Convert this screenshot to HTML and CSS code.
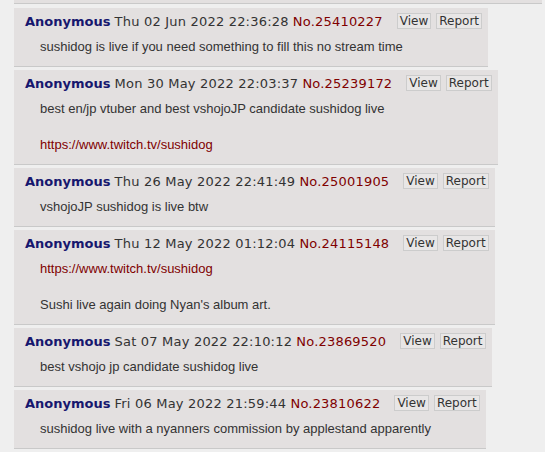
FILE: index.html
```html
<!DOCTYPE html>
<html>
<head>
<meta charset="utf-8">
<link rel="stylesheet" href="styles.css">
</head>
<body>
<div class="thread">
  <div class="prev"></div>

  <div class="post">
    <div class="info"><span class="name">Anonymous</span> <span class="date">Thu 02 Jun 2022 22:36:28</span> <a class="num">No.25410227</a><span class="btns"><a class="btn">View</a><a class="btn">Report</a></span></div>
    <blockquote class="msg">sushidog is live if you need something to fill this no stream time</blockquote>
  </div>

  <div class="post">
    <div class="info"><span class="name">Anonymous</span> <span class="date">Mon 30 May 2022 22:03:37</span> <a class="num">No.25239172</a><span class="btns"><a class="btn">View</a><a class="btn">Report</a></span></div>
    <blockquote class="msg">best en/jp vtuber and best vshojoJP candidate sushidog live<br><br><a class="link">https://www.twitch.tv/sushidog</a></blockquote>
  </div>

  <div class="post">
    <div class="info"><span class="name">Anonymous</span> <span class="date">Thu 26 May 2022 22:41:49</span> <a class="num">No.25001905</a><span class="btns"><a class="btn">View</a><a class="btn">Report</a></span></div>
    <blockquote class="msg">vshojoJP sushidog is live btw</blockquote>
  </div>

  <div class="post">
    <div class="info"><span class="name">Anonymous</span> <span class="date">Thu 12 May 2022 01:12:04</span> <a class="num">No.24115148</a><span class="btns"><a class="btn">View</a><a class="btn">Report</a></span></div>
    <blockquote class="msg"><a class="link">https://www.twitch.tv/sushidog</a><br><br>Sushi live again doing Nyan's album art.</blockquote>
  </div>

  <div class="post">
    <div class="info"><span class="name">Anonymous</span> <span class="date">Sat 07 May 2022 22:10:12</span> <a class="num">No.23869520</a><span class="btns"><a class="btn">View</a><a class="btn">Report</a></span></div>
    <blockquote class="msg">best vshojo jp candidate sushidog live</blockquote>
  </div>

  <div class="post">
    <div class="info"><span class="name">Anonymous</span> <span class="date">Fri 06 May 2022 21:59:44</span> <a class="num">No.23810622</a><span class="btns"><a class="btn">View</a><a class="btn">Report</a></span></div>
    <blockquote class="msg">sushidog live with a nyanners commission by applestand apparently</blockquote>
  </div>
</div>
</body>
</html>
```

FILE: styles.css
```css
html, body {
  margin: 0;
  padding: 0;
  background: #efefef;
}
body {
  font-family: "Liberation Sans", Arial, sans-serif;
  font-size: 13px;
  color: #333333;
}
.thread {
  padding-left: 14px;
  display: flex;
  flex-direction: column;
  align-items: flex-start;
}
.prev {
  width: 528px;
  height: 3px;
  background: #e3e0e0;
  border-bottom: 1px solid #c9c9c9;
  margin-bottom: 4px;
}
.post {
  background: #e3e0e0;
  border-bottom: 1px solid #c9c9c9;
  padding: 5px 6px 0 11px;
  margin-bottom: 3px;
}
.info {
  font-family: "DejaVu Sans", Verdana, sans-serif;
  font-size: 13px;
  line-height: 18px;
  color: #333333;
  white-space: nowrap;
}
.name {
  color: #17176e;
  font-weight: bold;
}
.date, .num {
  letter-spacing: 0.2px;
}
.num {
  color: #800000;
}
.btns {
  margin-left: 14px;
}
.btn {
  display: inline-block;
  font-family: "DejaVu Sans", Verdana, sans-serif;
  font-size: 12px;
  line-height: 14px;
  padding: 0 2px;
  border: 1px solid #cccccc;
  background: #e8e6e6;
  color: #333333;
  margin-left: 5px;
  vertical-align: 1px;
}
.btn:first-child {
  margin-left: 0;
}
.msg {
  margin: 7px 0 10px 15px;
  line-height: 18px;
}
.link {
  color: #800000;
}
```
